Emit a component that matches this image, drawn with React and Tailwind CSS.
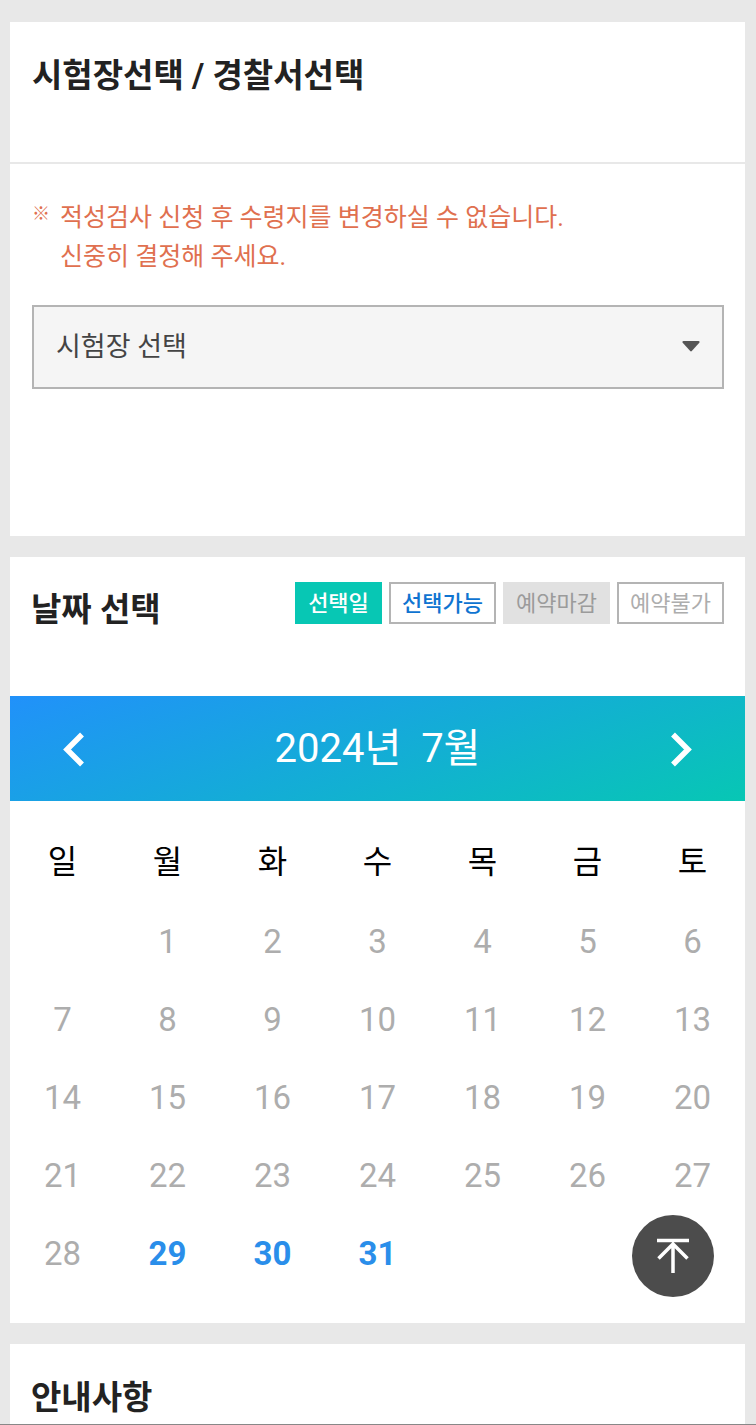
import { useState } from 'react';

const WEEKDAYS = ['일', '월', '화', '수', '목', '금', '토'];

const LEGEND = [
  { label: '선택일', className: 'w-[87px] border-[#07c7b4] bg-[#07c7b4] font-medium text-white' },
  { label: '선택가능', className: 'w-[107px] border-[#b4b4b4] bg-white font-medium text-[#0f74d1]' },
  { label: '예약마감', className: 'w-[107px] border-[#e1e1e1] bg-[#e1e1e1] text-[#9b9b9b]' },
  { label: '예약불가', className: 'w-[107px] border-[#b4b4b4] bg-white text-[#adadad]' },
];

const AVAILABLE = {
  '2024-7': [29, 30, 31],
};

function getWeeks(year, month) {
  const firstDay = new Date(year, month - 1, 1).getDay();
  const lastDate = new Date(year, month, 0).getDate();
  const cells = Array(firstDay).fill(null);
  for (let date = 1; date <= lastDate; date++) {
    cells.push(date);
  }
  while (cells.length % 7 !== 0) {
    cells.push(null);
  }
  const weeks = [];
  for (let i = 0; i < cells.length; i += 7) {
    weeks.push(cells.slice(i, i + 7));
  }
  return weeks;
}

function SectionTitle({ children }) {
  return <h2 className="text-[33px] leading-[48px] font-bold text-[#222]">{children}</h2>;
}

function PlaceSection() {
  const [place, setPlace] = useState('');

  return (
    <section className="bg-white pb-[147px]">
      <div className="border-b-2 border-[#e8e8e8] px-[22px] pt-[30px] pb-[62px]">
        <SectionTitle>시험장선택 / 경찰서선택</SectionTitle>
      </div>
      <div className="pt-[34px] pr-[21px] pl-[22px]">
        <p className="flex text-[25px] leading-[39px] text-[#e0704f]">
          <span className="w-7 shrink-0 text-[18px] leading-8 font-medium">※</span>
          <span>
            적성검사 신청 후 수령지를 변경하실 수 없습니다.
            <br />
            신중히 결정해 주세요.
          </span>
        </p>
        <div className="relative mt-[29px]">
          <select
            aria-label="시험장 선택"
            value={place}
            onChange={(e) => setPlace(e.target.value)}
            className="block h-[84px] w-full appearance-none rounded-none border-2 border-[#b4b4b4] bg-[#f5f5f5] pr-16 pl-[22px] text-[27px] text-[#444]"
          >
            <option value="">시험장 선택</option>
            <option value="gangnam">강남운전면허시험장</option>
            <option value="dobong">도봉운전면허시험장</option>
            <option value="seobu">서부운전면허시험장</option>
          </select>
          <svg
            className="pointer-events-none absolute top-9 right-6 h-3 w-[18px]"
            viewBox="0 0 18 12"
            fill="#555"
          >
            <path d="M1.500 0h15c1 0 1.4 1 .8 1.700l-7.500 8.300c-.5.5-1.100.5-1.600 0L.7 1.700C.1 1 .5 0 1.500 0z" />
          </svg>
        </div>
      </div>
    </section>
  );
}

function DateSection() {
  const [current, setCurrent] = useState({ year: 2024, month: 7 });
  const { year, month } = current;
  const available = AVAILABLE[`${year}-${month}`] || [];

  const moveMonth = (step) => {
    const next = new Date(year, month - 1 + step, 1);
    setCurrent({ year: next.getFullYear(), month: next.getMonth() + 1 });
  };

  return (
    <section className="bg-white pb-[30px]">
      <div className="flex items-start justify-between px-[21px] pt-[25px] pb-[62px]">
        <div className="pt-1">
          <SectionTitle>날짜 선택</SectionTitle>
        </div>
        <ul className="flex gap-[7px]">
          {LEGEND.map((item) => (
            <li
              key={item.label}
              className={`h-[42px] border-2 text-center text-[22px] leading-10 whitespace-nowrap ${item.className}`}
            >
              {item.label}
            </li>
          ))}
        </ul>
      </div>

      <div className="flex h-[105px] items-center justify-between bg-[linear-gradient(160deg,#2191fa,#07c7b4)] px-10 text-white">
        <button type="button" aria-label="이전 달" className="p-3" onClick={() => moveMonth(-1)}>
          <svg className="h-9 w-6" viewBox="0 0 24 36" fill="none" stroke="currentColor" strokeWidth="5.5">
            <path d="M20 3.500 5 18.500 20 33.500" />
          </svg>
        </button>
        <h3 className="text-[40px] leading-[56px] whitespace-pre">{`${year}년  ${month}월`}</h3>
        <button type="button" aria-label="다음 달" className="p-3" onClick={() => moveMonth(1)}>
          <svg className="h-9 w-6" viewBox="0 0 24 36" fill="none" stroke="currentColor" strokeWidth="5.5">
            <path d="M4 3.500 19 18.500 4 33.500" />
          </svg>
        </button>
      </div>

      <div className="pt-[19px]">
        <table className="w-full table-fixed text-center text-[33px]">
          <thead>
            <tr className="h-[83px]">
              {WEEKDAYS.map((day) => (
                <th key={day} scope="col" className="p-0 text-[32px] font-normal text-black">
                  {day}
                </th>
              ))}
            </tr>
          </thead>
          <tbody>
            {getWeeks(year, month).map((week, i) => (
              <tr key={i} className="h-[78px] text-[#adadad]">
                {week.map((date, j) => (
                  <td key={j} className="p-0 leading-10">
                    {available.includes(date) ? (
                      <button type="button" className="font-bold text-[#2a8eea]">
                        {date}
                      </button>
                    ) : (
                      date
                    )}
                  </td>
                ))}
              </tr>
            ))}
          </tbody>
        </table>
      </div>
    </section>
  );
}

export default function App() {
  return (
    <div className="min-h-screen border-b border-[#888] bg-[#e8e8e8] pt-[22px] pr-[11px] pl-2.5 font-['Roboto','Noto_Sans_CJK_KR',sans-serif]">
      <main className="flex flex-col gap-[21px]">
        <PlaceSection />
        <DateSection />
        <section className="h-20 bg-white px-[21px] pt-[30px]">
          <SectionTitle>안내사항</SectionTitle>
        </section>
      </main>

      <button
        type="button"
        aria-label="맨 위로"
        onClick={() => window.scrollTo({ top: 0, behavior: 'smooth' })}
        className="fixed right-[42px] bottom-32 flex size-[82px] items-center justify-center rounded-full bg-[#4c4c4c] text-white"
      >
        <svg className="h-9 w-8" viewBox="0 0 32 36" fill="none" stroke="currentColor" strokeWidth="3.5">
          <path d="M0 2.500h32M16 35V6M1.500 20.500 16 6 30.500 20.500" />
        </svg>
      </button>
    </div>
  );
}
